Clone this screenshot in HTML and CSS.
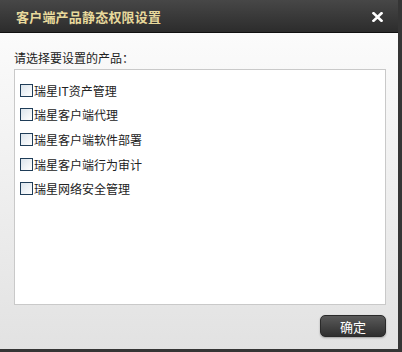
FILE: index.html
```html
<!DOCTYPE html>
<html lang="zh-CN">
<head>
    <meta charset="UTF-8">
    <title>客户端产品静态权限设置</title>
    <link rel="stylesheet" href="styles.css">
</head>
<body>
    <div class="dialog">
        <div class="titlebar">
            <span class="title">客户端产品静态权限设置</span>
            <svg class="close" width="11" height="10" viewBox="0 0 11 10">
                <path d="M1.5 1.2 L9.5 8.8 M9.5 1.2 L1.5 8.8" stroke="#fff" stroke-width="2.6" stroke-linecap="square"/>
            </svg>
        </div>
        <div class="body">
            <div class="label">请选择要设置的产品：</div>
            <div class="list">
                <label class="item"><span class="check"></span>瑞星IT资产管理</label>
                <label class="item"><span class="check"></span>瑞星客户端代理</label>
                <label class="item"><span class="check"></span>瑞星客户端软件部署</label>
                <label class="item"><span class="check"></span>瑞星客户端行为审计</label>
                <label class="item"><span class="check"></span>瑞星网络安全管理</label>
            </div>
            <div class="actions">
                <button class="btn">确定</button>
            </div>
        </div>
    </div>
</body>
</html>
```
FILE: styles.css
```css
body {
    margin: 0;
    padding: 0;
    font-family: "Noto Sans CJK SC", "DejaVu Sans", sans-serif;
    font-size: 12px;
    color: #222;
    background-color: #333;
}

.dialog {
    width: 402px;
    height: 352px;
    box-sizing: border-box;
    border-right: 4px solid #353535;
    border-bottom: 3px solid #353535;
    display: flex;
    flex-direction: column;
    overflow: hidden;
}

.titlebar {
    height: 32px;
    border-bottom: 1px solid #111;
    background: linear-gradient(#474747, #2c2c2c);
    display: flex;
    align-items: center;
    justify-content: space-between;
    padding: 0 15px 0 16px;
}

.title {
    color: #e8d99c;
    font-weight: bold;
    font-size: 13px;
    letter-spacing: 0.2px;
}

.close {
    display: block;
    margin-top: 2px;
}

.body {
    flex: 1;
    background: linear-gradient(#fbfbfb, #e2e2e2);
    padding: 17px 12px 0 14px;
    display: flex;
    flex-direction: column;
}

.label {
    height: 19px;
    line-height: 16px;
}

.list {
    height: 236px;
    box-sizing: border-box;
    background-color: #fff;
    border: 1px solid #c9c9c9;
    padding: 8px 0 0 5px;
    display: flex;
    flex-direction: column;
}

.item {
    height: 24.6px;
    display: flex;
    align-items: center;
    color: #222;
}

.check {
    width: 11px;
    height: 11px;
    border: 1px solid #1f3d58;
    background: linear-gradient(135deg, #dbe4ec, #ffffff);
    margin-right: 1px;
}

.actions {
    display: flex;
    justify-content: flex-end;
    padding-top: 10px;
}

.btn {
    width: 66px;
    height: 22px;
    border: 1px solid #2a2a2a;
    border-radius: 5px;
    background: linear-gradient(#5a5a5a, #2f2f2f);
    color: #fff;
    font-family: "Noto Sans CJK SC", sans-serif;
    font-size: 13px;
    padding: 0;
    box-shadow: 0 1px 2px rgba(0, 0, 0, 0.3);
}
```
